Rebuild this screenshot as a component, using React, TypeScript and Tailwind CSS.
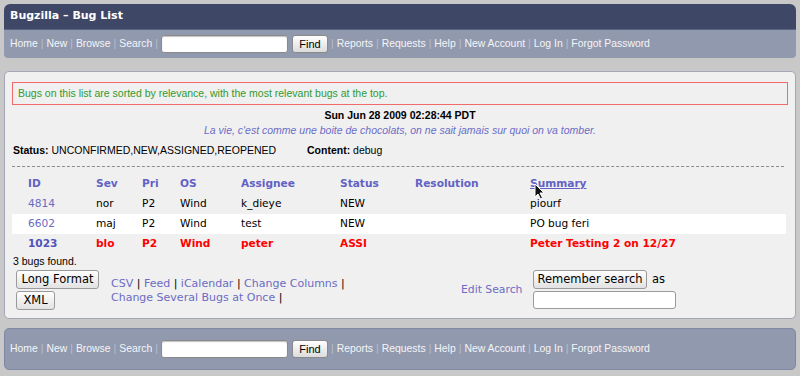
import React from "react";

const navLinks1 = ["Home", "New", "Browse", "Search"];
const navLinks2 = ["Reports", "Requests", "Help", "New Account", "Log In", "Forgot Password"];

function Sep() {
  return <span className="mx-[3px] text-[#b9bdcb]">|</span>;
}

function NavBar() {
  return (
    <div className="flex items-center text-[10.4px] text-[#f4f5f8] font-['Liberation_Sans',Arial,sans-serif]">
      {navLinks1.map((l, i) => (
        <React.Fragment key={l}>
          {i > 0 && <Sep />}
          <span>{l}</span>
        </React.Fragment>
      ))}
      <Sep />
      <input className="h-[18px] w-[127px] rounded-[3px] border border-[#8a8a8a] bg-white shadow-[inset_0_1px_1px_rgba(0,0,0,0.25)]" />
      <button className="ml-[4px] h-[18px] w-[36px] rounded-[3px] border border-[#8a8a8a] bg-gradient-to-b from-white to-[#dcdcdc] text-[11px] text-black">
        Find
      </button>
      {navLinks2.map((l) => (
        <React.Fragment key={l}>
          <Sep />
          <span>{l}</span>
        </React.Fragment>
      ))}
    </div>
  );
}

const cols = "grid grid-cols-[68px_46px_38px_61px_99px_75px_115px_1fr] pl-[16px] h-[20px] items-center";

const rows = [
  { id: "4814", sev: "nor", pri: "P2", os: "Wind", who: "k_dieye", st: "NEW", res: "", sum: "piourf", bg: "", hot: false },
  { id: "6602", sev: "maj", pri: "P2", os: "Wind", who: "test", st: "NEW", res: "", sum: "PO bug feri", bg: "bg-white", hot: false },
  { id: "1023", sev: "blo", pri: "P2", os: "Wind", who: "peter", st: "ASSI", res: "", sum: "Peter Testing 2 on 12/27", bg: "", hot: true },
];

function Btn({ children, w }: { children: React.ReactNode; w: string }) {
  return (
    <button className={`${w} h-[19px] rounded-[3px] border border-[#9a9a9a] bg-gradient-to-b from-white to-[#e2e2e2] text-[11.5px] text-black font-['DejaVu_Sans',Verdana,sans-serif]`}>
      {children}
    </button>
  );
}

export default function App() {
  return (
    <div className="min-h-[376px] w-[800px] bg-[#c8c8c8] px-[4px] pt-[4px] font-['Liberation_Sans',Arial,sans-serif]">
      {/* header */}
      <div className="overflow-hidden rounded-[6px] rounded-b-[4px]">
        <div className="flex h-[25px] items-center bg-[#3e4766] px-[6px] text-[11px] font-bold text-white font-['DejaVu_Sans',Verdana,sans-serif]">
          Bugzilla – Bug List
        </div>
        <div className="flex h-[29px] items-center border-t border-[#5a6380] bg-[#9199ae] px-[6px]">
          <NavBar />
        </div>
      </div>

      {/* main panel */}
      <div className="mt-[13px] h-[248px] rounded-[5px] border border-[#a3a6b4] bg-[#f0f0f0] px-[7px] pt-[10px] text-[10.5px] text-black">
        <div className="flex h-[23px] items-center border border-[#f06a6a] px-[5px] text-[#2f9a2f]">
          Bugs on this list are sorted by relevance, with the most relevant bugs at the top.
        </div>
        <div className="mt-[3px] h-[15px] text-center font-bold leading-[15px]">Sun Jun 28 2009 02:28:44 PDT</div>
        <div className="h-[15px] text-center italic leading-[15px] text-[#6c6cc6]">
          La vie, c'est comme une boite de chocolats, on ne sait jamais sur quoi on va tomber.
        </div>
        <div className="mt-[5px] flex h-[15px] items-center pl-[1px]">
          <span className="w-[294px]">
            <b>Status:</b> UNCONFIRMED,NEW,ASSIGNED,REOPENED
          </span>
          <span>
            <b>Content:</b> debug
          </span>
        </div>
        <div className="mt-[8px] mr-[4px] border-t border-dashed border-[#8c8c8c]" />

        {/* bug table */}
        <div className="relative mt-[7px] mr-[2px] text-[10.6px] font-['DejaVu_Sans',Verdana,sans-serif]">
          <div className={`${cols} font-bold text-[#6262c4]`}>
            <span>ID</span>
            <span>Sev</span>
            <span>Pri</span>
            <span>OS</span>
            <span>Assignee</span>
            <span>Status</span>
            <span>Resolution</span>
            <span className="underline">Summary</span>
          </div>
          {rows.map((r) => (
            <div key={r.id} className={`${cols} ${r.bg} ${r.hot ? "font-bold text-[#ff0000]" : "text-black"}`}>
              <span className={r.hot ? "text-[#5050b8]" : "text-[#6b6bbf]"}>{r.id}</span>
              <span>{r.sev}</span>
              <span>{r.pri}</span>
              <span>{r.os}</span>
              <span>{r.who}</span>
              <span>{r.st}</span>
              <span>{r.res}</span>
              <span>{r.sum}</span>
            </div>
          ))}
          {/* mouse pointer */}
          <svg className="absolute left-[522px] top-[9px]" width="11" height="17" viewBox="0 0 11 17">
            <path d="M1 1 L1 14 L4 11 L6.5 16 L8.5 15 L6 10 L10 10 Z" fill="#111" stroke="#fff" strokeWidth="1" />
          </svg>
        </div>

        <div className="h-[14px] leading-[14px] pl-[1px]">3 bugs found.</div>

        <div className="mt-[2px] flex pl-[4px]">
          <div className="flex w-[83px] flex-col items-start gap-[2px]">
            <Btn w="w-[83px]">Long Format</Btn>
            <Btn w="w-[39px]">XML</Btn>
          </div>
          <div className="ml-[12px] w-[338px] pt-[7px] text-[11px] leading-[14px] text-[#6b6bc4] font-['DejaVu_Sans',Verdana,sans-serif]">
            <div>
              CSV <span className="text-black">|</span> Feed <span className="text-black">|</span> iCalendar{" "}
              <span className="text-black">|</span> Change Columns <span className="text-black">|</span>
            </div>
            <div>
              Change Several Bugs at Once <span className="text-black">|</span>
            </div>
          </div>
          <div className="ml-[12px] flex w-[72px] items-center whitespace-nowrap pt-[1px] text-[10.8px] text-[#6b6bc4] font-['DejaVu_Sans',Verdana,sans-serif]">
            Edit Search
          </div>
          <div className="flex flex-col gap-[2px]">
            <div className="flex items-center">
              <Btn w="w-[114px]">Remember search</Btn>
              <span className="ml-[5px] text-[11.5px] font-['DejaVu_Sans',Verdana,sans-serif]">as</span>
            </div>
            <input className="h-[18px] w-[143px] rounded-[3px] border border-[#9a9a9a] bg-white" />
          </div>
        </div>
      </div>

      {/* footer */}
      <div className="mt-[9px] flex h-[42px] items-center rounded-[5px] border border-[#7f88a2] bg-[#9199ae] px-[5px]">
        <NavBar />
      </div>
    </div>
  );
}
